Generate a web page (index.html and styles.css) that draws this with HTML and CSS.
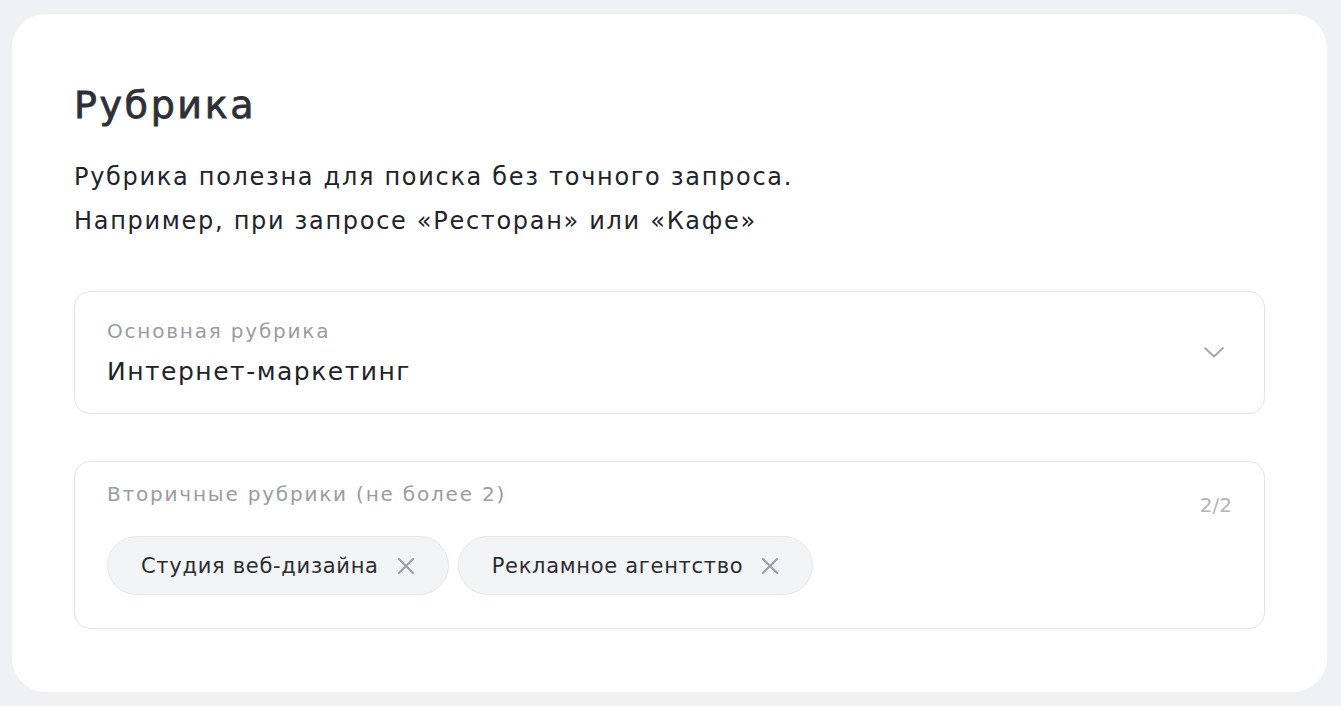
FILE: index.html
```html
<!DOCTYPE html>
<html lang="ru">
<head>
  <meta charset="UTF-8">
  <title>Рубрика</title>
  <link rel="stylesheet" href="styles.css">
</head>
<body>
  <div class="card">
    <!-- Heading -->
    <h1 class="title">Рубрика</h1>
    <p class="hint">Рубрика полезна для поиска без точного запроса.<br>Например, при запросе «Ресторан» или «Кафе»</p>

    <!-- Main category -->
    <div class="field select">
      <div class="field-body">
        <div class="label">Основная рубрика</div>
        <div class="value">Интернет-маркетинг</div>
      </div>
      <svg class="chevron" width="22" height="13" viewBox="0 0 22 13">
        <path d="M2 2 L11 10.5 L20 2" fill="none" stroke="#a3a6ad" stroke-width="1.8" stroke-linecap="round" stroke-linejoin="round"/>
      </svg>
    </div>

    <!-- Secondary categories -->
    <div class="field multi">
      <div class="field-head">
        <div class="label">Вторичные рубрики (не более 2)</div>
        <div class="counter">2/2</div>
      </div>
      <div class="chips">
        <div class="chip">
          <span>Студия веб-дизайна</span>
          <svg class="remove" width="18" height="18" viewBox="0 0 18 18">
            <path d="M2 2 L16 16 M16 2 L2 16" stroke="#9ea1a8" stroke-width="2.2" stroke-linecap="round"/>
          </svg>
        </div>
        <div class="chip">
          <span>Рекламное агентство</span>
          <svg class="remove" width="18" height="18" viewBox="0 0 18 18">
            <path d="M2 2 L16 16 M16 2 L2 16" stroke="#9ea1a8" stroke-width="2.2" stroke-linecap="round"/>
          </svg>
        </div>
      </div>
    </div>
  </div>
</body>
</html>
```

FILE: styles.css
```css
* {
  box-sizing: border-box;
  margin: 0;
  padding: 0;
}

body {
  background: #f0f1f4;
  font-family: "DejaVu Sans", "Noto Sans", sans-serif;
  color: #21232a;
  padding: 14px 14px 0 12px;
}

.card {
  background: #fff;
  border-radius: 34px;
  padding: 69px 62px 0 62px;
  height: 678px;
}

.title {
  font-size: 38px;
  font-weight: 400;
  line-height: 44px;
  letter-spacing: 2.6px;
  -webkit-text-stroke: 0.8px #2e3038;
  color: #2e3038;
}

.hint {
  margin-top: 28px;
  font-size: 24px;
  line-height: 44px;
  letter-spacing: 1.7px;
  color: #21232a;
}

.field {
  border: 1px solid #e2e4e8;
  border-radius: 16px;
  padding: 0 32px;
}

.select {
  margin-top: 48px;
  height: 123px;
  display: flex;
  align-items: center;
  justify-content: space-between;
}

.label {
  font-size: 20px;
  line-height: 26px;
  letter-spacing: 1.8px;
  color: #9a9ca2;
}

.value {
  margin-top: 12px;
  font-size: 25px;
  line-height: 32px;
  letter-spacing: 1.5px;
  color: #21232a;
}

.chevron {
  margin-right: 7px;
}

.multi {
  margin-top: 47px;
  height: 168px;
  padding-top: 19px;
}

.field-head {
  display: flex;
  justify-content: space-between;
}

.counter {
  font-size: 20px;
  line-height: 26px;
  color: #b3b5ba;
  margin-top: 11px;
}

.chips {
  display: flex;
  gap: 9px;
  margin-top: 18px;
}

.chip {
  display: flex;
  align-items: center;
  gap: 18px;
  height: 59px;
  padding: 0 33px;
  border-radius: 30px;
  background: #f3f4f6;
  border: 1px solid #e6e7ea;
  font-size: 21px;
  letter-spacing: 0.7px;
  color: #2b2d35;
}
```
